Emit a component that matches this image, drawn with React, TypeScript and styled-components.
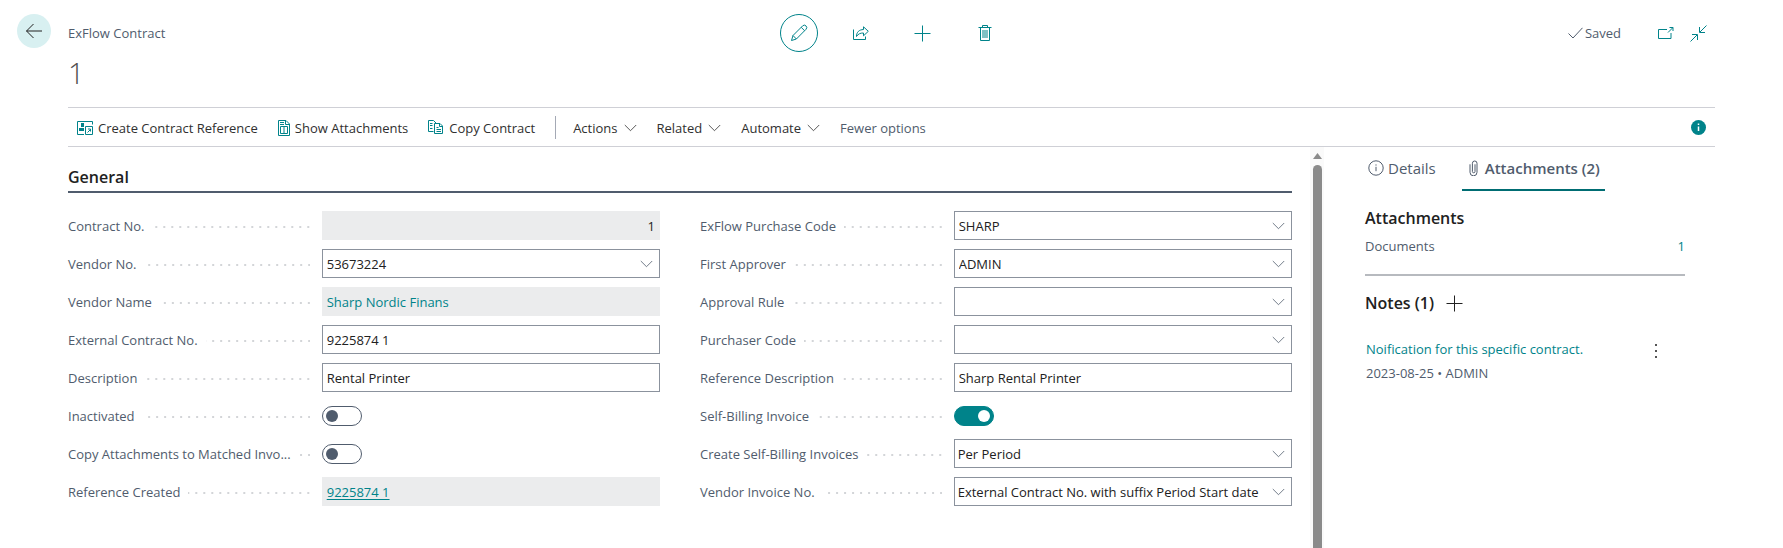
import React from "react";
import styled, { createGlobalStyle, css } from "styled-components";

const teal = "#00838a";
const slate = "#505c6d";
const ink = "#212121";

const GlobalStyle = createGlobalStyle`
  *, *::before, *::after { box-sizing: border-box; }
  body { margin: 0; background: #fff; }
  body, button, input, select {
    font-family: "Open Sans", "Noto Sans", sans-serif;
    font-size: 13px;
    line-height: 20px;
    color: ${ink};
  }
  button { border: 0; padding: 0; background: none; cursor: pointer; }
  svg { display: block; flex: none; }
  h1, h2, h3, p { margin: 0; }
`;

/* ---------- page frame ---------- */

const Page = styled.div`
  min-height: 100vh;
  display: grid;
  grid-template-columns: 68px minmax(0, 1fr);
  padding-right: 68px;
`;

const Gutter = styled.div`
  padding: 14px 0 0 17px;
`;

const BackButton = styled.button`
  width: 34px;
  height: 34px;
  border-radius: 50%;
  background: #d8f0f1;
  display: flex;
  align-items: center;
  justify-content: center;
`;

const Main = styled.main`
  display: flex;
  flex-direction: column;
`;

const Header = styled.header`
  display: grid;
  grid-template-columns: 1fr auto 1fr;
  align-items: center;
  margin-top: 14px;
`;

const Caption = styled.p`
  color: ${slate};
`;

const Title = styled.h1`
  margin: 1px 0 14px;
  font-size: 29px;
  line-height: 40px;
  font-weight: 300;
  color: #505050;
`;

const HeaderActions = styled.div`
  display: flex;
`;

const HeaderAction = styled.button<{ $ringed?: boolean }>`
  width: 38px;
  height: 38px;
  margin: 0 12px;
  border-radius: 50%;
  border: 1px solid ${(p) => (p.$ringed ? teal : "transparent")};
  color: ${teal};
  display: flex;
  align-items: center;
  justify-content: center;
`;

const HeaderStatus = styled.div`
  display: flex;
  justify-content: flex-end;
  align-items: center;
  gap: 16px;
  padding-right: 8px;
  color: ${teal};
`;

const Saved = styled.span`
  display: flex;
  align-items: center;
  gap: 2px;
  margin-right: 21px;
  color: ${slate};
`;

const IconButton = styled.button`
  color: inherit;
`;

/* ---------- action bar ---------- */

const ActionBar = styled.nav`
  display: flex;
  align-items: center;
  height: 40px;
  padding: 1px 9px 0;
  border-top: 1px solid #cfd0d6;
  border-bottom: 1px solid #cfd0d6;
`;

const Action = styled.button<{ $muted?: boolean; $menu?: boolean }>`
  display: flex;
  align-items: center;
  gap: ${(p) => (p.$menu ? "6px" : "5px")};
  margin-right: 20px;
  white-space: nowrap;
  color: ${(p) => (p.$muted ? slate : "#303030")};
`;

const TealIcon = styled.span`
  color: ${teal};
`;

const Divider = styled.span`
  width: 1px;
  height: 23px;
  margin-right: 17px;
  background: #a4a9b5;
`;

const InfoButton = styled.button`
  margin-left: auto;
  color: ${teal};
`;

/* ---------- form ---------- */

const Body = styled.div`
  flex: 1;
  display: flex;
  align-items: stretch;
`;

const Form = styled.form`
  flex: 1;
  min-width: 0;
  padding-top: 18px;
`;

const SectionTitle = styled.h2`
  padding-bottom: 2px;
  border-bottom: 2px solid ${slate};
  font-size: 16px;
  line-height: 24px;
  font-weight: 600;
`;

const Columns = styled.div`
  display: grid;
  grid-template-columns: 1fr 1fr;
  gap: 40px;
  padding-top: 18px;
`;

const Column = styled.div`
  display: flex;
  flex-direction: column;
  gap: 9px;
`;

const Row = styled.div`
  display: grid;
  grid-template-columns: 3fr 4fr;
  align-items: center;
  height: 29px;
`;

const LabelCell = styled.div`
  display: flex;
  align-items: center;
  gap: 8px;
  padding-right: 12px;
  color: ${slate};
  white-space: nowrap;
`;

const Dots = styled.span`
  flex: 1;
  height: 2px;
  margin-top: 2px;
  background: linear-gradient(to right, transparent 6px, #d3d5d8 6px) right top / 8px 2px repeat-x;
`;

const fieldText = css`
  width: 100%;
  min-width: 0;
  height: 100%;
  padding: 0 4px;
  border: 0;
  outline: 0;
  background: none;
`;

const Box = styled.div<{ $readOnly?: boolean }>`
  display: grid;
  grid-template-columns: minmax(0, 1fr) 26px;
  align-items: center;
  height: 29px;
  border: 1px solid ${(p) => (p.$readOnly ? "#ebeced" : "#8b929d")};
  background: ${(p) => (p.$readOnly ? "#ebeced" : "#fff")};
`;

const TextInput = styled.input<{ $wide?: boolean; $right?: boolean }>`
  ${fieldText}
  grid-column: ${(p) => (p.$wide ? "1 / -1" : "1")};
  text-align: ${(p) => (p.$right ? "right" : "left")};
`;

const Select = styled.select`
  ${fieldText}
  grid-area: 1 / 1 / 2 / -1;
  padding: 0 3px;
  appearance: none;
`;

const SelectMark = styled.span`
  grid-area: 1 / 2;
  pointer-events: none;
  display: flex;
  justify-content: center;
  color: ${slate};
`;

const LookupButton = styled.button`
  display: flex;
  justify-content: center;
  color: ${slate};
`;

const ValueLink = styled.a<{ $underlined?: boolean }>`
  padding: 0 4px;
  color: ${teal};
  text-decoration: none;
  span { text-decoration: ${(p) => (p.$underlined ? "underline" : "none")}; text-underline-offset: 2px; }
`;

const Toggle = styled.input`
  appearance: none;
  margin: 0;
  width: 40px;
  height: 20px;
  padding: 0 3px;
  border: 1px solid ${slate};
  border-radius: 10px;
  display: flex;
  align-items: center;
  &::before {
    content: "";
    width: 12px;
    height: 12px;
    border-radius: 50%;
    background: ${slate};
  }
  &:checked {
    justify-content: flex-end;
    border-color: ${teal};
    background: ${teal};
  }
  &:checked::before { background: #fff; }
`;

/* ---------- scroll rail ---------- */

const Rail = styled.div`
  width: 14px;
  margin-left: 18px;
  padding-top: 6px;
  display: flex;
  flex-direction: column;
  align-items: center;
  gap: 6px;
  background: #fafafa;
`;

const Thumb = styled.div`
  flex: 1;
  width: 9px;
  border-radius: 5px 5px 0 0;
  background: #8b8b8b;
`;

/* ---------- side panel ---------- */

const Side = styled.aside`
  width: 324px;
  margin: 0 30px 0 37px;
`;

const Tabs = styled.div`
  display: flex;
  gap: 21px;
`;

const Tab = styled.button<{ $active?: boolean }>`
  display: flex;
  align-items: center;
  gap: 4px;
  height: 44px;
  padding: 0 5px 0 7px;
  border-bottom: 2px solid ${(p) => (p.$active ? "#006d73" : "transparent")};
  font-size: 15px;
  font-weight: ${(p) => (p.$active ? 600 : 400)};
  color: ${slate};
  white-space: nowrap;
`;

const SideSection = styled.section<{ $ruled?: boolean }>`
  margin-left: 4px;
  padding: 15px 0 18px;
  border-bottom: ${(p) => (p.$ruled ? "2px solid #b7babf" : "0")};
`;

const SideTitle = styled.h3`
  display: flex;
  align-items: center;
  gap: 12px;
  font-size: 16px;
  line-height: 24px;
  font-weight: 600;
`;

const CountLine = styled.div`
  display: flex;
  justify-content: space-between;
  margin-top: 6px;
  color: ${slate};
`;

const Link = styled.a`
  color: ${teal};
  text-decoration: none;
`;

const Note = styled.article`
  display: flex;
  justify-content: space-between;
  align-items: flex-start;
  padding: 24px 28px 0 1px;
`;

const NoteMeta = styled.p`
  margin-top: 4px;
  color: ${slate};
`;

const NoteMenu = styled.button`
  padding: 5px 0;
  color: #555;
`;

/* ---------- icons ---------- */

type IconProps = { w: number; h: number; children: React.ReactNode };
const Icon = ({ w, h, children }: IconProps) => (
  <svg width={w} height={h} viewBox={`0 0 ${w} ${h}`} fill="none" stroke="currentColor" strokeWidth="1" aria-hidden="true">
    {children}
  </svg>
);

const BackIcon = () => <Icon w={18} h={16}><path d="M17 8H1.5M8.5 1 1.5 8l7 7" /></Icon>;
const PencilIcon = () => (
  <Icon w={18} h={18}>
    <path d="M1.5 16.5 3 11.5 12.6 1.9a2.3 2.3 0 0 1 3.4 3.4L6.4 15 1.5 16.5ZM3 11.5 6.4 15M11.2 3.3l3.4 3.4" />
  </Icon>
);
const ShareIcon = () => (
  <Icon w={18} h={16}>
    <path d="M1.5 4.5v10h12v-3" />
    <path d="M4.5 11.5c0-4.5 2.7-6.8 7-7V1.8l4.800 4.5-4.8 4.5V8c-3.2 0-5.3.8-7 3.5Z" />
  </Icon>
);
const PlusIcon = () => <Icon w={17} h={17}><path d="M8.5 .5v16M.5 8.5h16" /></Icon>;
const TrashIcon = () => (
  <Icon w={14} h={18}>
    <path d="M.5 3.5h13M4.5 3.5v-2h5v2M2.5 3.5v13h9v-13" />
    <rect x="4" y="6" width="6" height="8" fill="currentColor" stroke="none" opacity=".5" />
  </Icon>
);
const CheckIcon = () => <Icon w={15} h={12}><path d="M.5 6.5 5 11 14.5.8" /></Icon>;
const PopOutIcon = () => (
  <Icon w={16} h={12}>
    <path d="M9 2.500H.5v9h12.500V6" />
    <path d="M10 5.500 14.800.7M11.500.5h3.500V4" />
  </Icon>
);
const CollapseIcon = () => (
  <Icon w={17} h={17}>
    <path d="M.5 16.500 7 10M2 9.500h5.500V15M16.500.5 10 7M9.500 2v5.500H15" />
  </Icon>
);
const ContractIcon = () => (
  <Icon w={16} h={14}>
    <path d="M7 13.500H.5V.5h15v3" />
    <path d="M8.500 5.500h7v8h-7z" />
    <path d="M4 2h3v4H4zM2 7h5v3H2z" fill="currentColor" stroke="none" />
    <path d="M10.500 11.500 13 9M11 8h2.500v2.500" />
  </Icon>
);
const AttachIcon = () => (
  <Icon w={12} h={16}>
    <path d="M.5.5h7.500l3.500 3.500v11.500H.5zM7.500.5v4h4M2 2.500h4M2 4.500h4" />
    <path d="M2.500 6.500h7v7h-7zM6 6.500v7" />
  </Icon>
);
const CopyIcon = () => (
  <Icon w={16} h={15}>
    <path d="M5.500 11.500H.5V.5h5l2.500 2.500M2 3.500h2.500M2 5.500h2.500M2 8.500h2.500" />
    <path d="M6.500 3.500h5.500l2.500 2.500v7.500h-8zM11.500 3.500V6.500H14.500M8.500 7.500h2M8.500 9.500h4.500M8.500 11.500h4.500" />
  </Icon>
);
const Chevron = () => <Icon w={13} h={8}><path d="m.8 1 5.700 5.700L12.200 1" opacity=".8" /></Icon>;
const InfoSolid = () => (
  <Icon w={15} h={15}>
    <circle cx="7.5" cy="7.5" r="7.5" fill="currentColor" stroke="none" />
    <path d="M7.500 6.500V11M7.500 3.500V5" stroke="#fff" strokeWidth="1.5" />
  </Icon>
);
const InfoOutline = () => (
  <Icon w={16} h={16}>
    <circle cx="8" cy="8" r="7.2" />
    <path d="M8 6.800v4.400M8 4.400v1.200" />
  </Icon>
);
const ClipIcon = () => (
  <Icon w={12} h={16}>
    <path d="M6 4.300v7.200a1.300 1.300 0 0 1-2.600 0V3.300a2.200 2.200 0 0 1 4.600 0v9a3.500 3.500 0 0 1-7 0V4.300" />
  </Icon>
);
const RailArrow = () => (
  <svg width="9" height="6" viewBox="0 0 9 6" aria-hidden="true"><path d="M0 6 4.500 0 9 6Z" fill="#8b8b8b" /></svg>
);
const KebabIcon = () => (
  <svg width="2" height="14" viewBox="0 0 2 14" fill="currentColor" aria-hidden="true">
    <path d="M0 0h2v2H0zM0 6h2v2H0zM0 12h2v2H0z" />
  </svg>
);

/* ---------- fields ---------- */

type Kind = "text" | "number" | "lookup" | "select" | "toggle" | "link" | "underlined";
type Field = { id: string; label: string; kind: Kind; value?: string; on?: boolean };

const leftFields: Field[] = [
  { id: "contract-no", label: "Contract No.", kind: "number", value: "1" },
  { id: "vendor-no", label: "Vendor No.", kind: "lookup", value: "53673224" },
  { id: "vendor-name", label: "Vendor Name", kind: "link", value: "Sharp Nordic Finans" },
  { id: "external-no", label: "External Contract No.", kind: "text", value: "9225874 1" },
  { id: "description", label: "Description", kind: "text", value: "Rental Printer" },
  { id: "inactivated", label: "Inactivated", kind: "toggle" },
  { id: "copy-attachments", label: "Copy Attachments to Matched Invo...", kind: "toggle" },
  { id: "reference-created", label: "Reference Created", kind: "underlined", value: "9225874 1" },
];

const rightFields: Field[] = [
  { id: "purchase-code", label: "ExFlow Purchase Code", kind: "lookup", value: "SHARP" },
  { id: "first-approver", label: "First Approver", kind: "lookup", value: "ADMIN" },
  { id: "approval-rule", label: "Approval Rule", kind: "lookup", value: "" },
  { id: "purchaser-code", label: "Purchaser Code", kind: "lookup", value: "" },
  { id: "reference-description", label: "Reference Description", kind: "text", value: "Sharp Rental Printer" },
  { id: "self-billing", label: "Self-Billing Invoice", kind: "toggle", on: true },
  { id: "create-invoices", label: "Create Self-Billing Invoices", kind: "select", value: "Per Period" },
  { id: "vendor-invoice-no", label: "Vendor Invoice No.", kind: "select", value: "External Contract No. with suffix Period Start date" },
];

const Control = ({ id, label, kind, value, on }: Field) => {
  switch (kind) {
    case "toggle":
      return <Toggle id={id} type="checkbox" role="switch" defaultChecked={on} />;
    case "select":
      return (
        <Box>
          <Select id={id} defaultValue={value}><option>{value}</option></Select>
          <SelectMark><Chevron /></SelectMark>
        </Box>
      );
    case "lookup":
      return (
        <Box>
          <TextInput id={id} type="text" defaultValue={value} />
          <LookupButton type="button" aria-label={`Choose ${label}`}><Chevron /></LookupButton>
        </Box>
      );
    case "link":
    case "underlined":
      return (
        <Box $readOnly>
          <ValueLink id={id} href="#" aria-describedby={`${id}-label`} $underlined={kind === "underlined"}><span>{value}</span></ValueLink>
        </Box>
      );
    case "number":
      return <Box $readOnly><TextInput id={id} type="text" readOnly defaultValue={value} $wide $right /></Box>;
    default:
      return <Box><TextInput id={id} type="text" defaultValue={value} $wide /></Box>;
  }
};

const FieldRow = (field: Field) => {
  const isLink = field.kind === "link" || field.kind === "underlined";
  return (
    <Row>
      <LabelCell>
        {isLink ? <span id={`${field.id}-label`}>{field.label}</span> : <label htmlFor={field.id}>{field.label}</label>}
        <Dots />
      </LabelCell>
      <Control {...field} />
    </Row>
  );
};

export default function App() {
  return (
    <>
      <GlobalStyle />
      <Page>
        <Gutter>
          <BackButton aria-label="Back"><BackIcon /></BackButton>
        </Gutter>
        <Main>
          <Header>
            <Caption>ExFlow Contract</Caption>
            <HeaderActions>
              <HeaderAction $ringed aria-label="Edit"><PencilIcon /></HeaderAction>
              <HeaderAction aria-label="Share"><ShareIcon /></HeaderAction>
              <HeaderAction aria-label="New"><PlusIcon /></HeaderAction>
              <HeaderAction aria-label="Delete"><TrashIcon /></HeaderAction>
            </HeaderActions>
            <HeaderStatus>
              <Saved><CheckIcon />Saved</Saved>
              <IconButton aria-label="Open in new window"><PopOutIcon /></IconButton>
              <IconButton aria-label="Collapse"><CollapseIcon /></IconButton>
            </HeaderStatus>
          </Header>
          <Title>1</Title>

          <ActionBar>
            <Action><TealIcon><ContractIcon /></TealIcon>Create Contract Reference</Action>
            <Action><TealIcon><AttachIcon /></TealIcon>Show Attachments</Action>
            <Action><TealIcon><CopyIcon /></TealIcon>Copy Contract</Action>
            <Divider />
            <Action $menu>Actions<Chevron /></Action>
            <Action $menu>Related<Chevron /></Action>
            <Action $menu>Automate<Chevron /></Action>
            <Action $muted>Fewer options</Action>
            <InfoButton aria-label="Information"><InfoSolid /></InfoButton>
          </ActionBar>

          <Body>
            <Form>
              <SectionTitle>General</SectionTitle>
              <Columns>
                <Column>{leftFields.map((f) => <FieldRow key={f.id} {...f} />)}</Column>
                <Column>{rightFields.map((f) => <FieldRow key={f.id} {...f} />)}</Column>
              </Columns>
            </Form>
            <Rail><RailArrow /><Thumb /></Rail>
            <Side>
              <Tabs role="tablist">
                <Tab role="tab" aria-selected={false}><InfoOutline />Details</Tab>
                <Tab role="tab" aria-selected $active><ClipIcon />Attachments (2)</Tab>
              </Tabs>
              <SideSection $ruled>
                <SideTitle>Attachments</SideTitle>
                <CountLine><span>Documents</span><Link href="#">1</Link></CountLine>
              </SideSection>
              <SideSection>
                <SideTitle>Notes (1)<IconButton aria-label="Add note"><PlusIcon /></IconButton></SideTitle>
                <Note>
                  <div>
                    <Link href="#">Noification for this specific contract.</Link>
                    <NoteMeta>2023-08-25 • ADMIN</NoteMeta>
                  </div>
                  <NoteMenu aria-label="Note options"><KebabIcon /></NoteMenu>
                </Note>
              </SideSection>
            </Side>
          </Body>
        </Main>
      </Page>
    </>
  );
}
